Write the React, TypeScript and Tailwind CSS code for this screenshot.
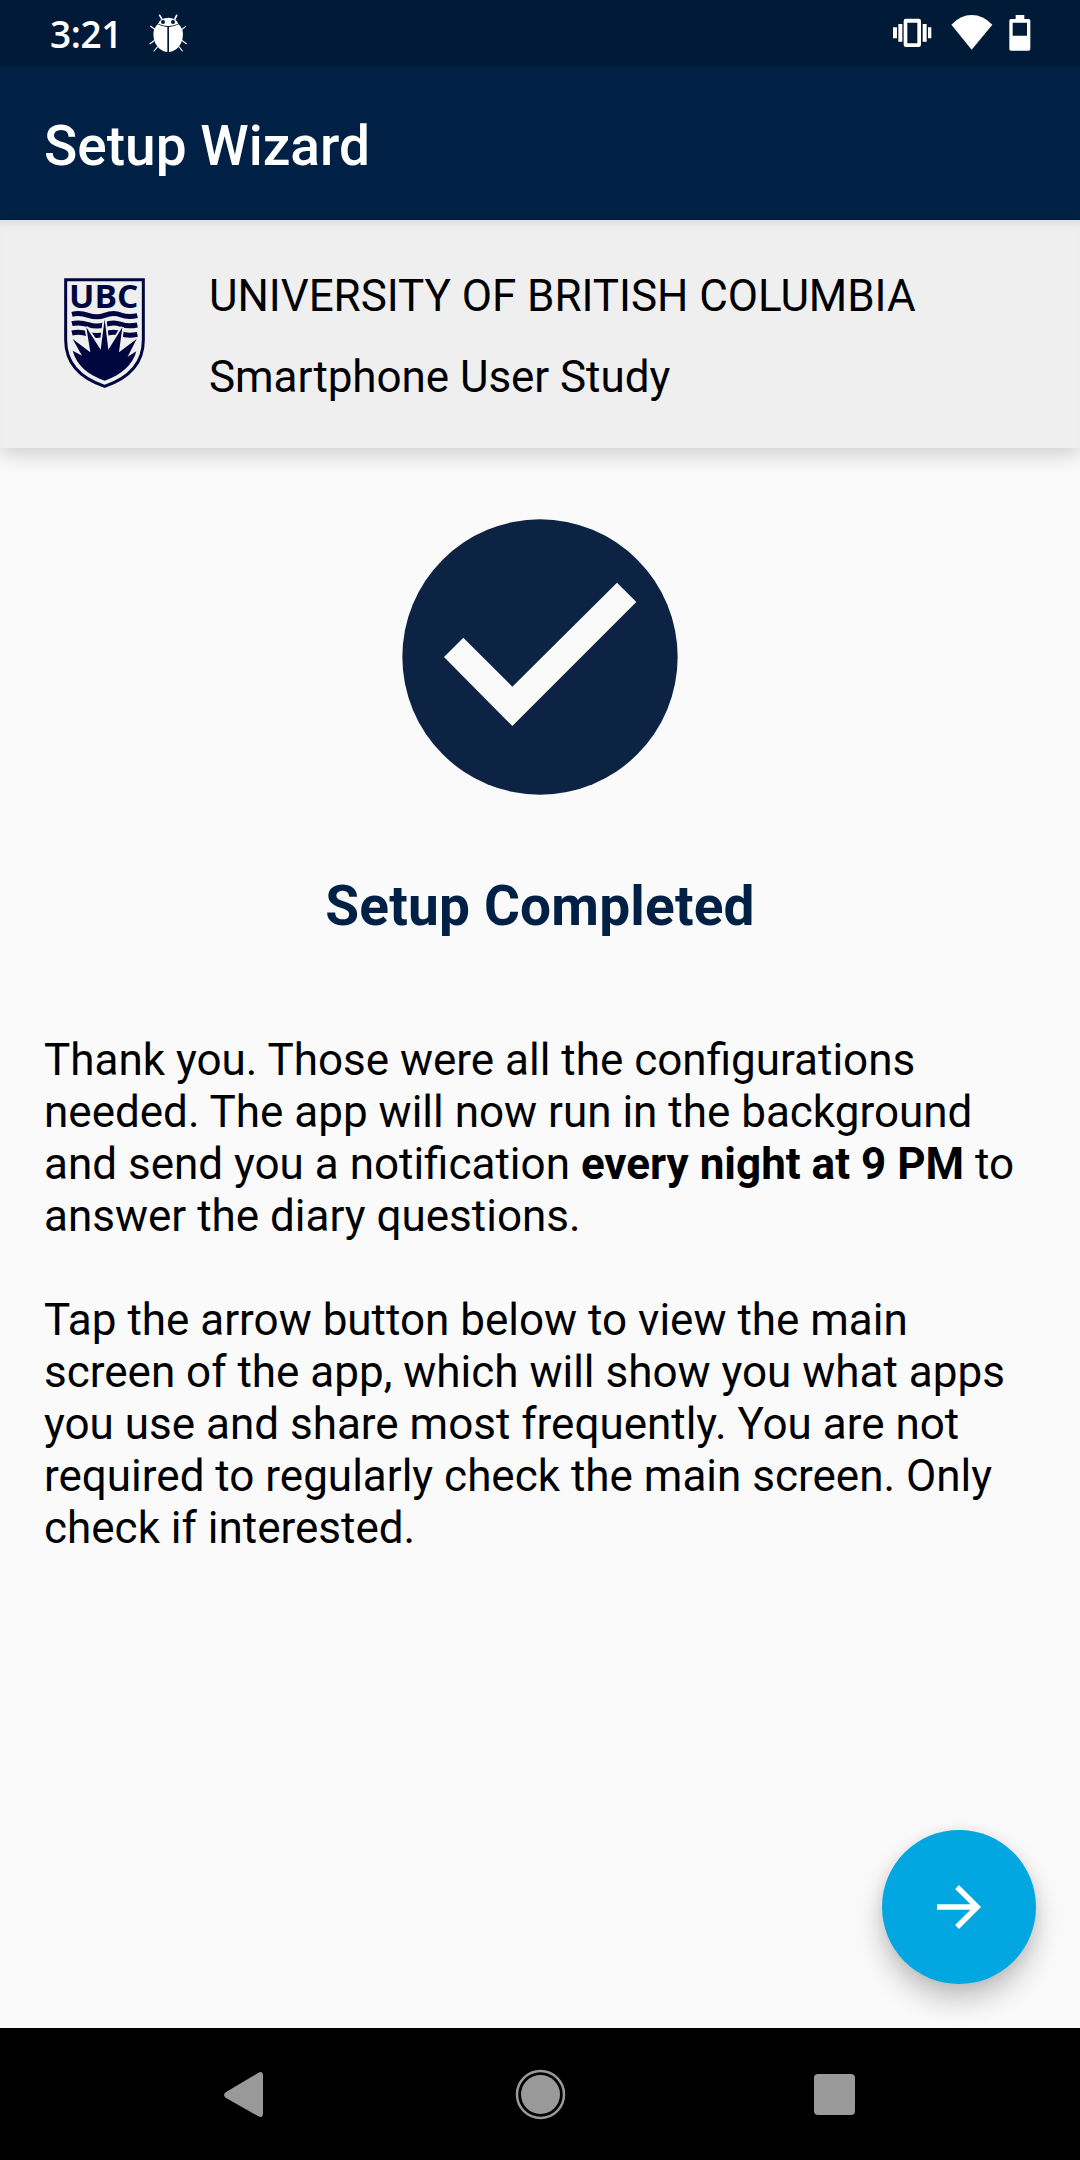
import React from "react";

function BugIcon() {
  return (
    <svg className="ml-[31px] h-[38px] w-[38px]" viewBox="447 42 114 114" fill="none">
      <g stroke="#fff" strokeWidth="3.5" strokeLinecap="round">
        <path d="M485 56L479 46M525 56L530 46" strokeWidth="5" />
        <path d="M464 88L452 79M462 122L450 131M472 141L462 153M546 88L557 79M547 122L559 131M538 141L547 153" />
      </g>
      <path d="M474 71Q482 53 505 53Q528 53 535 71Q520 78 505 78Q490 78 474 71Z" fill="#fff" />
      <circle cx="489" cy="66" r="6" fill="#001a37" />
      <circle cx="519" cy="66" r="6" fill="#001a37" />
      <path d="M473 73Q488 81 502 81V156Q478 154 466 130Q460 116 460 102Q461 84 473 73Z" fill="#fff" />
      <path d="M536 73Q521 81 507 81V156Q531 154 543 130Q549 116 549 102Q548 84 536 73Z" fill="#fff" />
    </svg>
  );
}

function StatusBar() {
  return (
    <div className="flex h-[66px] shrink-0 items-center bg-[#001a37] pr-[3px] pl-[50px] text-white">
      <span className="w-[68px] pt-px font-['Open_Sans',sans-serif] text-[37px] leading-[66px] font-semibold tracking-[-0.4px]">
        3:21
      </span>
      <BugIcon />
      <svg className="ml-auto h-[66px] w-[190px]" viewBox="80 0 570 198" fill="#fff">
        <path fillRule="evenodd" d="M137 56H175Q182 56 182 63V134Q182 141 175 141H137Q130 141 130 134V63Q130 56 137 56ZM141 68V130H171V68Z" />
        <path d="M114 72H126V125H114ZM187 72H199V125H187ZM98 82H110V115H98ZM203 82H213V115H203Z" />
        <path d="M334 149L273 74Q300 45 334 45Q369 45 396 74Z" />
        <path fillRule="evenodd" d="M466 45H492V57H505Q510 57 510 62V147Q510 152 505 152H452Q447 152 447 147V62Q447 57 452 57H466ZM457 68V107H500V68Z" />
      </svg>
    </div>
  );
}

function UbcCrest() {
  return (
    <svg className="h-[135px] w-[110px] shrink-0" viewBox="0 0 330 405" fill="none">
      <path d="M47 44H280V225C280 290 240 338 164 364C87 338 47 290 47 225Z" stroke="#000640" strokeWidth="9" />
      <text x="57" y="130" textLength="208" lengthAdjust="spacingAndGlyphs" fontFamily="Open Sans, sans-serif" fontWeight="700" fontSize="96" fill="#000640">
        UBC
      </text>
      <g stroke="#000640" strokeWidth="15">
        <path d="M66 148C86 143 100 146 115 151S148 157 164 151S198 144 213 150S242 156 262 152" />
        <path d="M66 176C86 171 100 174 115 179S148 185 164 179S198 172 213 178S242 184 262 180" />
        <path d="M66 204C86 199 100 202 115 207S148 213 164 207S198 200 213 206S242 212 262 208" />
      </g>
      <path
        d="M164 163L175 254L217 187L207 262L260 222L233 275L259 259C248 300 215 329 164 347C113 329 80 300 68 257L96 272L68 222L121 262L109 187L152 254Z"
        fill="#000640"
        stroke="#efefef"
        strokeWidth="11"
        paintOrder="stroke"
      />
    </svg>
  );
}

export default function App() {
  return (
    <div className="flex h-[2160px] w-[1080px] flex-col overflow-hidden bg-[#fafafa] font-[Roboto,sans-serif] text-black">
      <StatusBar />
      <header className="flex h-[154px] shrink-0 items-center bg-[#002145] px-[44px] pt-[5px]">
        <h1 className="text-[55px] leading-[64px] font-medium text-white">Setup Wizard</h1>
      </header>
      <section className="flex h-[228px] shrink-0 bg-[#efefef] pl-[50px] shadow-[0_6px_20px_rgba(0,0,0,0.18),inset_0_8px_8px_-6px_rgba(0,0,0,0.1)]">
        <div className="pt-[45px]">
          <UbcCrest />
        </div>
        <div className="flex flex-col gap-[29px] pt-[50px] pl-[49px] text-[44px] leading-[52px] tracking-[-0.06px] whitespace-nowrap">
          <p>UNIVERSITY OF BRITISH COLUMBIA</p>
          <p>Smartphone User Study</p>
        </div>
      </section>
      <main className="flex min-h-0 flex-1 flex-col px-[44px]">
        <svg className="mt-[71px] h-[276px] w-[276px] shrink-0 self-center" viewBox="37 57 826 828">
          <circle cx="450" cy="471" r="413" fill="#0d2344" />
          <path d="M162 471L220 413L367 560L681 248L739 306L367 678Z" fill="#fafafa" />
        </svg>
        <h2 className="mt-[79px] text-center text-[55px] leading-[64px] font-bold tracking-[0.18px] text-[#002145]">
          Setup Completed
        </h2>
        <div className="mt-[96px] text-[44px] leading-[52px] whitespace-nowrap">
          <p>
            Thank you. Those were all the configurations
            <br />
            needed. The app will now run in the background
            <br />
            and send you a notification <b>every night at 9 PM</b> to
            <br />
            answer the diary questions.
          </p>
          <p className="mt-[52px]">
            Tap the arrow button below to view the main
            <br />
            screen of the app, which will show you what apps
            <br />
            you use and share most frequently. You are not
            <br />
            required to regularly check the main screen. Only
            <br />
            check if interested.
          </p>
        </div>
        <button
          aria-label="Next"
          className="mt-auto mb-[44px] flex size-[154px] shrink-0 items-center justify-center self-end rounded-full bg-[#02a7e2] shadow-[0_16px_28px_rgba(0,0,0,0.22),0_2px_14px_rgba(0,0,0,0.08)]"
        >
          <svg className="size-[66px]" viewBox="0 0 24 24" fill="#fff">
            <path d="M12 4l-1.41 1.41L16.17 11H4v2h12.17l-5.58 5.59L12 20l8-8z" />
          </svg>
        </button>
      </main>
      <nav className="flex h-[132px] shrink-0 items-center bg-black">
        <svg className="h-[132px] w-full" viewBox="0 0 1080 132" fill="#999">
          <path d="M226 64L258 45Q263 42 263 48V85Q263 91 258 88L226 70Q222 67 226 64Z" />
          <circle cx="540.5" cy="66.5" r="19.5" />
          <circle cx="540.5" cy="66.5" r="23.5" fill="none" stroke="#999" strokeWidth="2.5" />
          <rect x="814" y="46" width="41" height="41" rx="4" />
        </svg>
      </nav>
    </div>
  );
}
